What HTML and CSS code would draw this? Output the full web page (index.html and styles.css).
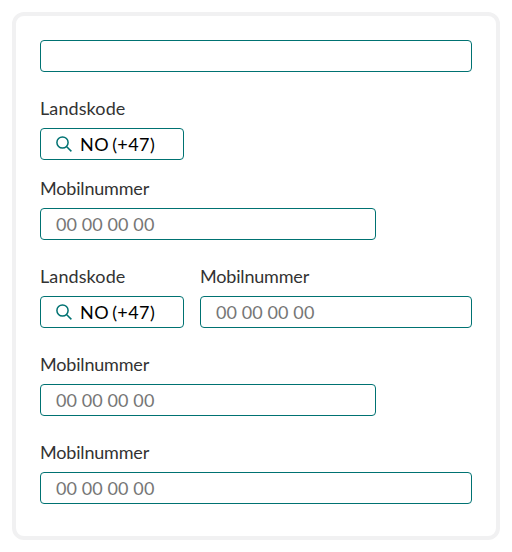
FILE: index.html
```html
<!DOCTYPE html>
<html lang="no">
<head>
<meta charset="utf-8">
<title>Mobilnummer</title>
<link rel="stylesheet" href="styles.css">
</head>
<body>
<main class="card">
  <div class="input"></div>
  <div class="group">
    <div class="field code"><span class="label l-code">Landskode</span><div class="input"><svg class="icon" viewBox="0 0 16 16"><circle cx="6.5" cy="6.5" r="5.6"/><path d="M10.5 10.5 15.4 15.4"/></svg><span class="value">NO (+47)</span></div></div>
    <div class="field medium"><span class="label">Mobilnummer</span><div class="input"><span class="placeholder">00 00 00 00</span></div></div>
  </div>
  <div class="row">
    <div class="field code"><span class="label l-code">Landskode</span><div class="input"><svg class="icon" viewBox="0 0 16 16"><circle cx="6.5" cy="6.5" r="5.6"/><path d="M10.5 10.5 15.4 15.4"/></svg><span class="value">NO (+47)</span></div></div>
    <div class="field grow"><span class="label">Mobilnummer</span><div class="input"><span class="placeholder">00 00 00 00</span></div></div>
  </div>
  <div class="field medium"><span class="label">Mobilnummer</span><div class="input"><span class="placeholder">00 00 00 00</span></div></div>
  <div class="field"><span class="label">Mobilnummer</span><div class="input"><span class="placeholder">00 00 00 00</span></div></div>
</main>
</body>
</html>
```

FILE: styles.css
```css
* { box-sizing: border-box; }
body { margin: 0; padding: 12px; background: #fff; font-family: Lato, sans-serif; font-size: 18px; color: #333; }
.card { display: flex; flex-direction: column; gap: 24px; height: 528px; padding: 24px; border: 4px solid #f1f1f2; border-radius: 12px; }
.group { display: flex; flex-direction: column; gap: 16px; }
.row { display: flex; gap: 16px; }
.field { display: flex; flex-direction: column; gap: 8px; }
.code { width: 144px; }
.medium { width: 336px; }
.grow { flex: 1; }
.label { align-self: flex-start; line-height: 24px; letter-spacing: -0.18px; white-space: nowrap; }
.l-code { letter-spacing: 0.1px; }
.input { display: flex; align-items: center; height: 32px; padding: 0 15px; border: 1px solid #007272; border-radius: 4px; white-space: nowrap; }
.icon { width: 16px; height: 16px; margin-right: 8px; fill: none; stroke: #007272; stroke-width: 1.5; stroke-linecap: butt; }
.value { letter-spacing: 0.4px; word-spacing: -1.8px; color: #000; }
.placeholder { letter-spacing: 0.1px; color: #767676; }
```
